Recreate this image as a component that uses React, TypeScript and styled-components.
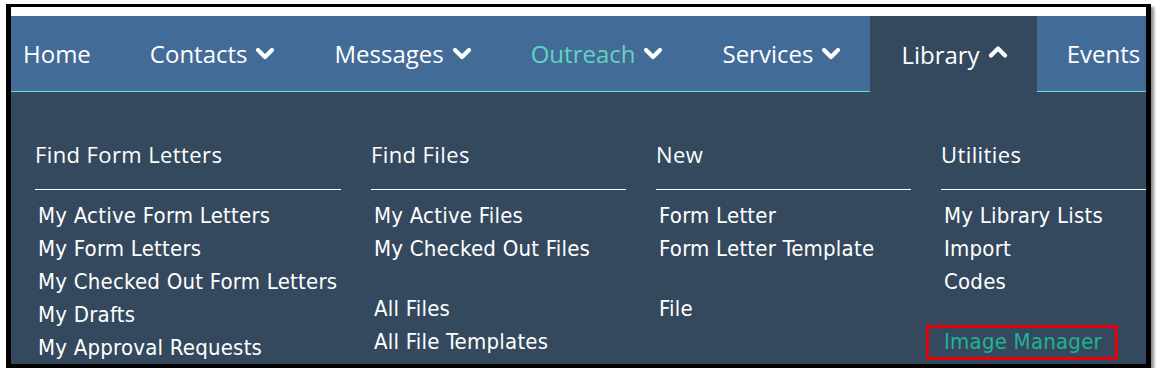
import React from "react";
import styled, { createGlobalStyle } from "styled-components";

const GlobalStyle = createGlobalStyle`
  html, body {
    margin: 0;
    padding: 0;
    background: #ffffff;
  }
`;

const colors = {
  navBlue: "#436b98",
  panel: "#34495e",
  tealLine: "#6fe0cb",
  outreach: "#63d3be",
  imageManager: "#1fb396",
  text: "#ffffff",
};

const Page = styled.div`
  padding: 4px 0 0 6px;
`;

const Frame = styled.div`
  width: 1135px;
  height: 357px;
  border-style: solid;
  border-color: #000;
  border-width: 3px 5px 4px 5px;
  box-shadow: 3px 3px 3px rgba(0, 0, 0, 0.45);
  overflow: hidden;
  background: #fff;
  display: flex;
  flex-direction: column;
`;

const TopStrip = styled.div`
  height: 9px;
  flex-shrink: 0;
  background: #fff;
`;

const NavBar = styled.nav`
  display: flex;
  height: 76px;
  flex-shrink: 0;
  box-sizing: border-box;
  background: ${colors.navBlue};
  border-bottom: 1px solid ${colors.tealLine};
  font-family: "Open Sans", "Noto Sans", sans-serif;
  font-size: 24px;
`;

const NavItem = styled.div<{ $active?: boolean; $first?: boolean; $highlight?: boolean }>`
  display: flex;
  align-items: center;
  gap: 8px;
  flex-shrink: 0;
  white-space: nowrap;
  height: ${(p) => (p.$active ? "76px" : "75px")};
  line-height: 75px;
  padding: 0 29px 0 ${(p) => (p.$first ? "12px" : p.$active ? "31px" : "30px")};
  background: ${(p) => (p.$active ? colors.panel : "transparent")};
  color: ${(p) => (p.$highlight ? colors.outreach : colors.text)};
`;

const ChevronSvg = styled.svg<{ $up?: boolean }>`
  width: 20px;
  height: 13px;
  flex-shrink: 0;
  margin-top: ${(p) => (p.$up ? "-6px" : "0")};
`;

const Chevron = ({ up }: { up?: boolean }) => (
  <ChevronSvg $up={up} viewBox="0 0 20 13">
    <path
      d={up ? "M3 10.5 L10 3.5 L17 10.5" : "M3 3 L10 10 L17 3"}
      fill="none"
      stroke="#ffffff"
      strokeWidth="4.2"
      strokeLinecap="round"
      strokeLinejoin="round"
    />
  </ChevronSvg>
);

const Panel = styled.div`
  flex: 1;
  background: ${colors.panel};
  display: grid;
  grid-template-columns: 306px 255px 255px 255px;
  column-gap: 30px;
  align-items: start;
  padding: 47px 0 0 24px;
`;

const Column = styled.div`
  display: flex;
  flex-direction: column;
`;

const Heading = styled.div`
  font-family: "Open Sans", "Noto Sans", sans-serif;
  font-size: 22px;
  letter-spacing: 0.4px;
  line-height: 30px;
  color: ${colors.text};
  padding-bottom: 20px;
  border-bottom: 1px solid #ffffff;
  white-space: nowrap;
`;

const List = styled.ul`
  list-style: none;
  margin: 9px 0 0;
  padding: 0;
`;

const Item = styled.li<{ $accent?: boolean }>`
  position: relative;
  font-family: "DejaVu Sans", "Liberation Sans", sans-serif;
  font-stretch: condensed;
  font-size: 22px;
  letter-spacing: 0.22px;
  line-height: 33px;
  padding-left: 3px;
  white-space: nowrap;
  color: ${(p) => (p.$accent ? colors.imageManager : colors.text)};
`;

const Spacer = styled.li`
  height: 27px;
`;

const Marked = styled.span`
  position: relative;
  display: inline-block;

  &::after {
    content: "";
    position: absolute;
    top: 0;
    bottom: -2px;
    left: -18px;
    right: -16px;
    border: 3px solid #e8000b;
  }
`;

type Entry = { label: string; accent?: boolean; marked?: boolean } | "spacer";

const columns: { title: string; entries: Entry[] }[] = [
  {
    title: "Find Form Letters",
    entries: [
      { label: "My Active Form Letters" },
      { label: "My Form Letters" },
      { label: "My Checked Out Form Letters" },
      { label: "My Drafts" },
      { label: "My Approval Requests" },
    ],
  },
  {
    title: "Find Files",
    entries: [
      { label: "My Active Files" },
      { label: "My Checked Out Files" },
      "spacer",
      { label: "All Files" },
      { label: "All File Templates" },
    ],
  },
  {
    title: "New",
    entries: [{ label: "Form Letter" }, { label: "Form Letter Template" }, "spacer", { label: "File" }],
  },
  {
    title: "Utilities",
    entries: [
      { label: "My Library Lists" },
      { label: "Import" },
      { label: "Codes" },
      "spacer",
      { label: "Image Manager", accent: true, marked: true },
    ],
  },
];

const navItems = [
  { label: "Home" },
  { label: "Contacts", menu: true },
  { label: "Messages", menu: true },
  { label: "Outreach", menu: true, highlight: true },
  { label: "Services", menu: true },
  { label: "Library", menu: true, active: true },
  { label: "Events", menu: true },
];

export default function App() {
  return (
    <>
      <GlobalStyle />
      <Page>
        <Frame>
          <TopStrip />
          <NavBar>
            {navItems.map((n, i) => (
              <NavItem key={n.label} $first={i === 0} $active={n.active} $highlight={n.highlight}>
                <span>{n.label}</span>
                {n.menu && <Chevron up={n.active} />}
              </NavItem>
            ))}
          </NavBar>
          <Panel>
            {columns.map((col) => (
              <Column key={col.title}>
                <Heading>{col.title}</Heading>
                <List>
                  {col.entries.map((e, i) =>
                    e === "spacer" ? (
                      <Spacer key={i} />
                    ) : (
                      <Item key={i} $accent={e.accent}>
                        {e.marked ? <Marked>{e.label}</Marked> : e.label}
                      </Item>
                    )
                  )}
                </List>
              </Column>
            ))}
          </Panel>
        </Frame>
      </Page>
    </>
  );
}
